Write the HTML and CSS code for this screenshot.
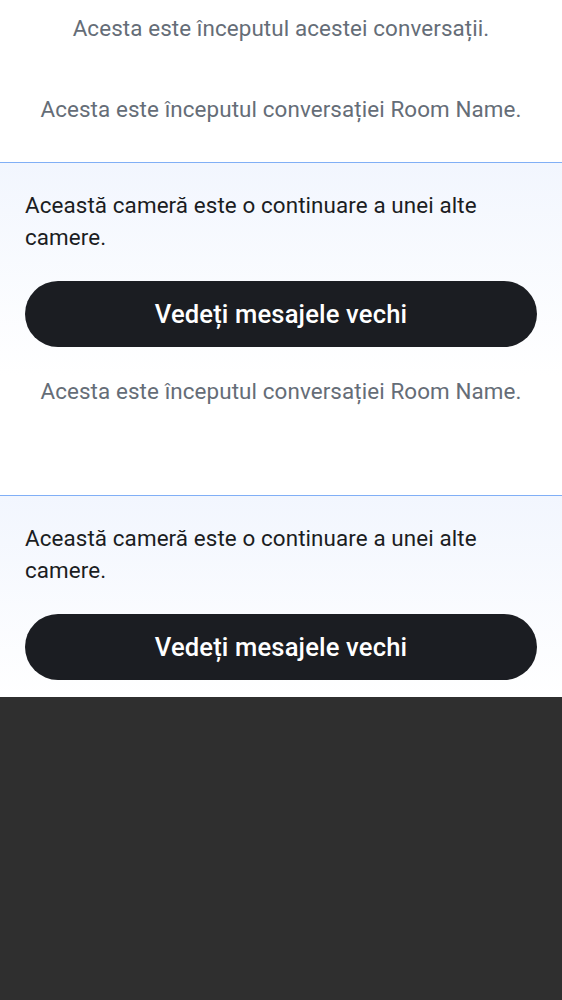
FILE: index.html
```html
<!DOCTYPE html>
<html lang="ro">
<head>
<meta charset="utf-8">
<link rel="stylesheet" href="styles.css">
</head>
<body>
<div class="page">
  <p class="start start-first">Acesta este începutul acestei conversații.</p>
  <p class="start start-room">Acesta este începutul conversației Room Name.</p>
  <section class="tomb">
    <p class="tomb-text">Această cameră este o continuare a unei alte camere.</p>
    <button class="tomb-btn">Vedeți mesajele vechi</button>
  </section>
  <p class="start start-after">Acesta este începutul conversației Room Name.</p>
  <section class="tomb tomb-last">
    <p class="tomb-text">Această cameră este o continuare a unei alte camere.</p>
    <button class="tomb-btn">Vedeți mesajele vechi</button>
  </section>
</div>
</body>
</html>
```
FILE: styles.css
```css
html, body {
  margin: 0;
  padding: 0;
  background: #2f2f2f;
}
.page {
  background: #ffffff;
  font-family: Roboto, "Noto Sans", sans-serif;
  display: flex;
  flex-direction: column;
}
.start {
  margin: 0;
  text-align: center;
  color: #656d77;
  font-size: 22.4px;
  line-height: 32px;
  letter-spacing: 0.1px;
}
.start-first { margin-top: 12px; }
.start-room { margin-top: 49px; margin-bottom: 37px; }
.start-after { margin-top: 0; margin-bottom: 88px; }
.tomb {
  border-top: 1px solid #80aff6;
  background: linear-gradient(#f2f6fe, #ffffff);
  padding: 26px 25px 28px;
  display: flex;
  flex-direction: column;
}
.tomb-last { padding-bottom: 17px; }
.tomb-text {
  margin: 0;
  font-size: 22.4px;
  line-height: 32px;
  letter-spacing: 0.1px;
  color: #1b1d22;
}
.tomb-btn {
  margin-top: 28px;
  height: 66px;
  border: none;
  border-radius: 33px;
  background: #1b1d22;
  color: #ffffff;
  font-family: Roboto, "Noto Sans", sans-serif;
  font-size: 25.6px;
  letter-spacing: 0.15px;
  font-weight: 500;
  padding: 0;
}
```
